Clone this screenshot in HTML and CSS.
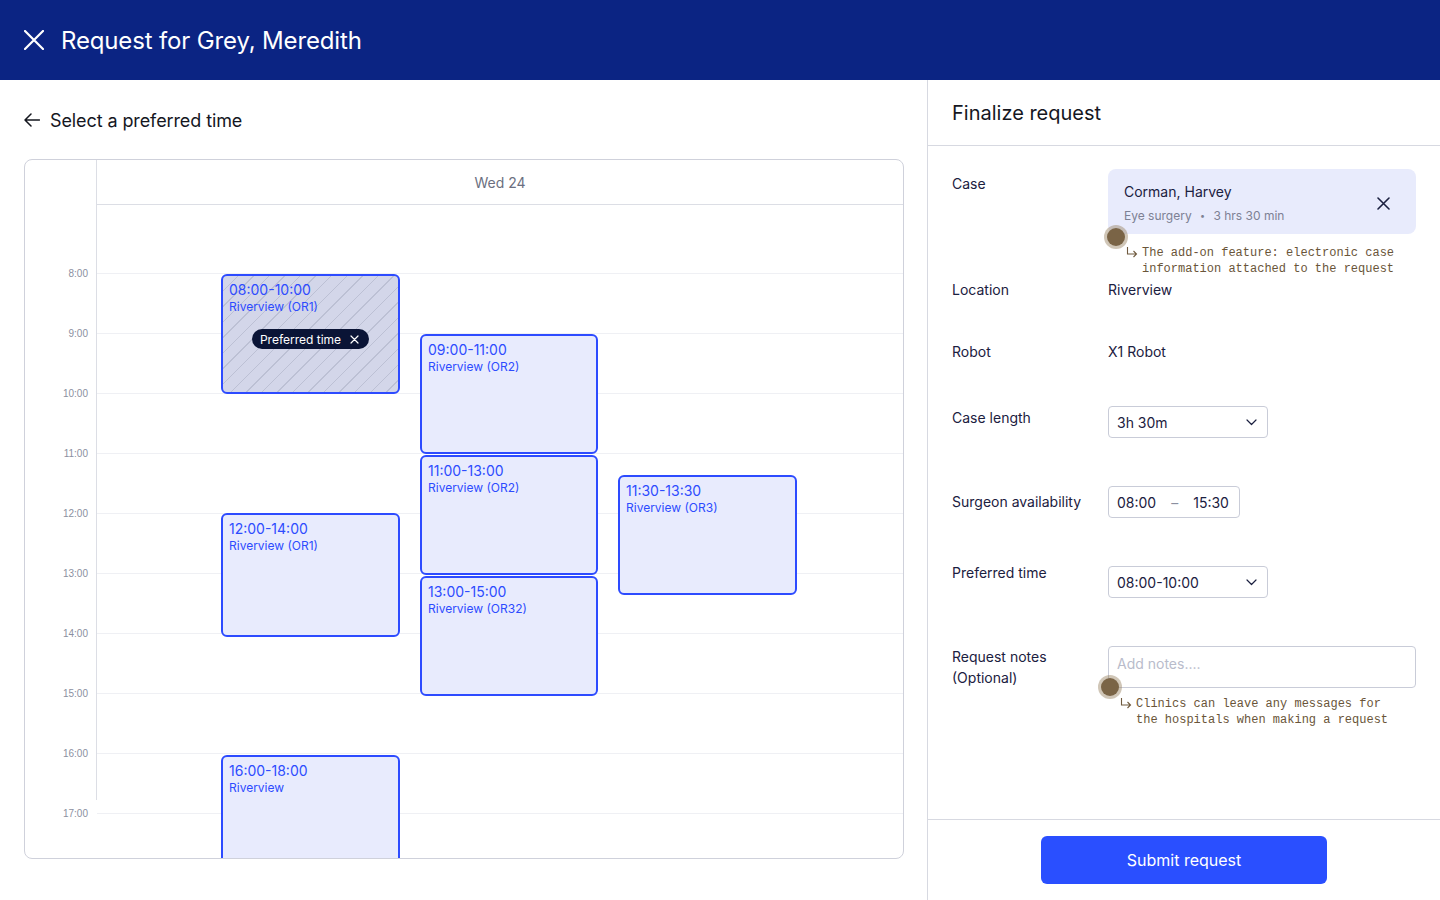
FILE: index.html
```html
<!DOCTYPE html>
<html lang="en">
<head>
<meta charset="utf-8">
<title>Request for Grey, Meredith</title>
<link rel="stylesheet" href="styles.css">
</head>
<body>
<header class="topbar">
  <span class="topbar-close" aria-label="Close">
    <svg width="20" height="20" viewBox="0 0 20 20"><path d="M1 1L19 19M19 1L1 19" stroke="#fff" stroke-width="2.2" stroke-linecap="round"/></svg>
  </span>
  <h1 class="topbar-title">Request for Grey, Meredith</h1>
</header>
<main class="layout">
  <section class="left">
    <div class="back-row">
      <svg width="16" height="14" viewBox="0 0 16 14"><path d="M15.5 7H1M7 1L1 7L7 13" fill="none" stroke="#15171f" stroke-width="1.5" stroke-linecap="round" stroke-linejoin="round"/></svg>
      <h2 class="back-title">Select a preferred time</h2>
    </div>
    <div class="calendar">
      <div class="gutter">
        <div class="time">8:00</div>
        <div class="time">9:00</div>
        <div class="time">10:00</div>
        <div class="time">11:00</div>
        <div class="time">12:00</div>
        <div class="time">13:00</div>
        <div class="time">14:00</div>
        <div class="time">15:00</div>
        <div class="time">16:00</div>
        <div class="time">17:00</div>
      </div>
      <div class="day">
        <div class="day-head">Wed 24</div>
        <div class="day-body">
          <div class="hour"></div><div class="hour"></div><div class="hour"></div><div class="hour"></div><div class="hour"></div>
          <div class="hour"></div><div class="hour"></div><div class="hour"></div><div class="hour"></div><div class="hour"></div>

          <div class="event event-preferred" style="top:69px;left:124px;width:179px;height:120px">
            <div class="ev-time">08:00-10:00</div>
            <div class="ev-loc">Riverview (OR1)</div>
            <div class="badge">Preferred time
              <svg width="9" height="9" viewBox="0 0 9 9"><path d="M1 1L8 8M8 1L1 8" stroke="#fff" stroke-width="1.2" stroke-linecap="round"/></svg>
            </div>
          </div>
          <div class="event" style="top:129px;left:323px;width:178px;height:120px">
            <div class="ev-time">09:00-11:00</div>
            <div class="ev-loc">Riverview (OR2)</div>
          </div>
          <div class="event" style="top:250px;left:323px;width:178px;height:120px">
            <div class="ev-time">11:00-13:00</div>
            <div class="ev-loc">Riverview (OR2)</div>
          </div>
          <div class="event" style="top:371px;left:323px;width:178px;height:120px">
            <div class="ev-time">13:00-15:00</div>
            <div class="ev-loc">Riverview (OR32)</div>
          </div>
          <div class="event" style="top:270px;left:521px;width:179px;height:120px">
            <div class="ev-time">11:30-13:30</div>
            <div class="ev-loc">Riverview (OR3)</div>
          </div>
          <div class="event" style="top:308px;left:124px;width:179px;height:124px">
            <div class="ev-time">12:00-14:00</div>
            <div class="ev-loc">Riverview (OR1)</div>
          </div>
          <div class="event" style="top:550px;left:124px;width:179px;height:120px">
            <div class="ev-time">16:00-18:00</div>
            <div class="ev-loc">Riverview</div>
          </div>
        </div>
      </div>
    </div>
  </section>

  <aside class="right">
    <div class="panel-head">Finalize request</div>
    <div class="form">
      <div class="row row-case">
        <div class="label">Case</div>
        <div class="value with-note">
          <div class="case-card">
            <div class="case-info">
              <div class="case-name">Corman, Harvey</div>
              <div class="case-meta">Eye surgery <span class="sep">•</span> 3 hrs 30 min</div>
            </div>
            <svg class="case-close" width="13" height="13" viewBox="0 0 13 13"><path d="M1 1L12 12M12 1L1 12" stroke="#1b2040" stroke-width="1.6" stroke-linecap="round"/></svg>
          </div>
          <span class="note-dot dot-case"></span>
          <div class="note note-case">
            <svg class="note-arrow" width="12" height="12" viewBox="0 0 12 12"><path d="M1.5 1V8H10.5M7.5 5L10.5 8L7.5 11" fill="none" stroke="#6f5a3e" stroke-width="1.1"/></svg>
            <span>The add-on feature: electronic case<br>information attached to the request</span>
          </div>
        </div>
      </div>

      <div class="row row-location">
        <div class="label">Location</div>
        <div class="value text-value">Riverview</div>
      </div>

      <div class="row row-robot">
        <div class="label">Robot</div>
        <div class="value text-value">X1 Robot</div>
      </div>

      <div class="row row-length">
        <div class="label label-length">Case length</div>
        <div class="value">
          <div class="select">3h 30m
            <svg width="11" height="7" viewBox="0 0 11 7"><path d="M1 1L5.5 5.5L10 1" fill="none" stroke="#1b2040" stroke-width="1.2" stroke-linecap="round" stroke-linejoin="round"/></svg>
          </div>
        </div>
      </div>

      <div class="row row-surgeon">
        <div class="label label-surgeon">Surgeon availability</div>
        <div class="value">
          <div class="range"><span>08:00</span><span class="dash">–</span><span>15:30</span></div>
        </div>
      </div>

      <div class="row row-preferred">
        <div class="label">Preferred time</div>
        <div class="value">
          <div class="select select-preferred">08:00-10:00
            <svg width="11" height="7" viewBox="0 0 11 7"><path d="M1 1L5.5 5.5L10 1" fill="none" stroke="#1b2040" stroke-width="1.2" stroke-linecap="round" stroke-linejoin="round"/></svg>
          </div>
        </div>
      </div>

      <div class="row row-notes">
        <div class="label label-notes">Request notes<br>(Optional)</div>
        <div class="value with-note">
          <div class="textarea">Add notes....</div>
          <span class="note-dot dot-notes"></span>
          <div class="note note-notes">
            <svg class="note-arrow" width="12" height="12" viewBox="0 0 12 12"><path d="M1.5 1V8H10.5M7.5 5L10.5 8L7.5 11" fill="none" stroke="#6f5a3e" stroke-width="1.1"/></svg>
            <span>Clinics can leave any messages for<br>the hospitals when making a request</span>
          </div>
        </div>
      </div>
    </div>
    <div class="panel-foot">
      <button class="submit" type="button">Submit request</button>
    </div>
  </aside>
</main>
</body>
</html>
```

FILE: styles.css
```css
* { box-sizing: border-box; }

html, body {
  margin: 0;
  padding: 0;
  width: 1440px;
  height: 900px;
  overflow: hidden;
  background: #ffffff;
  font-family: Inter, "Noto Sans", sans-serif;
  color: #15171f;
}

h1, h2 { margin: 0; font-weight: 400; }

/* Top bar */
.topbar {
  height: 80px;
  background: #0b2483;
  display: flex;
  align-items: center;
  padding: 0 24px;
  gap: 17px;
}
.topbar-close { display: flex; width: 20px; height: 20px; }
.topbar-title {
  color: #ffffff;
  font-size: 24px;
  line-height: 32px;
  padding-top: 2px;
  letter-spacing: -0.15px;
}

/* Layout */
.layout {
  display: flex;
  height: 820px;
}
.left {
  width: 928px;
  border-right: 1px solid #d7d9e1;
  padding: 24px 0 0 24px;
}
.right {
  width: 512px;
  display: flex;
  flex-direction: column;
}

/* Left panel */
.back-row {
  height: 32px;
  display: flex;
  align-items: center;
  gap: 10px;
  margin-bottom: 23px;
}
.back-title {
  font-size: 18px;
  line-height: 24px;
  padding-top: 2px;
  letter-spacing: -0.1px;
  color: #15171f;
}

.calendar {
  width: 880px;
  height: 700px;
  border: 1px solid #cfd1db;
  border-radius: 8px;
  overflow: hidden;
  display: flex;
}
.gutter {
  width: 72px;
  flex: none;
  position: relative;
  padding-top: 108px;
}
.gutter::after {
  content: "";
  position: absolute;
  top: 0;
  right: 0;
  width: 1px;
  height: 640px;
  background: #dcdee5;
}
.time {
  height: 60px;
  font-family: "Liberation Sans", Arial, sans-serif;
  font-size: 10px;
  line-height: 12px;
  color: #8b8fa0;
  text-align: right;
  padding-right: 9px;
}

.day {
  flex: 1;
  display: flex;
  flex-direction: column;
}
.day-head {
  height: 45px;
  border-bottom: 1px solid #dcdee5;
  text-align: center;
  line-height: 44px;
  padding-top: 1px;
  font-size: 14px;
  color: #6b6f80;
}
.day-body {
  position: relative;
  flex: 1;
  padding-top: 68px;
}
.hour {
  height: 60px;
  border-top: 1px solid #eff0f4;
}

.event {
  position: absolute;
  border: 2px solid #2d4bff;
  border-radius: 6px;
  background: #e8ebfd;
  padding: 5px 6px 4px;
  color: #2d4bff;
  display: flex;
  flex-direction: column;
}
.ev-time {
  font-size: 14px;
  line-height: 18px;
}
.ev-loc {
  font-size: 12px;
  line-height: 16px;
}
.event-preferred {
  background-color: #d3d6e9;
  background-image: repeating-linear-gradient(135deg, transparent 0 10px, #bcc0d4 10px 11px);
}
.badge {
  align-self: center;
  margin-top: 14px;
  height: 20px;
  padding: 0 10px 0 8px;
  border-radius: 10px;
  background: #0a1436;
  color: #ffffff;
  font-size: 12px;
  display: flex;
  align-items: center;
  gap: 9px;
}

/* Right panel */
.panel-head {
  height: 66px;
  border-bottom: 1px solid #d7d9e1;
  padding: 1px 24px 0;
  display: flex;
  align-items: center;
  font-size: 20px;
  color: #15171f;
}
.form {
  flex: 1;
  padding: 23px 24px 0 24px;
}
.row {
  display: grid;
  grid-template-columns: 156px 308px;
  align-items: start;
}
.label {
  font-size: 14px;
  line-height: 20px;
  color: #1b2040;
}
.value { font-size: 14px; color: #1b2040; }
.text-value { line-height: 20px; }

.row-case .label { padding-top: 5px; }
.row-location { margin-top: 3px; }
.row-robot { margin-top: 42px; }
.row-length { margin-top: 44px; }
.label-length { padding-top: 2px; }
.row-surgeon { margin-top: 48px; }
.label-surgeon { padding-top: 6px; }
.row-preferred { margin-top: 45px; }
.select-preferred { margin-top: 3px; }
.row-notes { margin-top: 48px; }
.label-notes { line-height: 21px; }

.with-note { position: relative; }

.case-card {
  background: #e8ebfc;
  border-radius: 8px;
  padding: 13px 26px 10px 16px;
  display: flex;
  align-items: center;
  justify-content: space-between;
}
.case-name {
  font-size: 14px;
  line-height: 20px;
  color: #1b2040;
}
.case-meta {
  margin-top: 6px;
  font-size: 12px;
  line-height: 16px;
  color: #7d8194;
}
.sep { margin: 0 5px; font-size: 9px; vertical-align: 1px; }

.note-dot {
  position: absolute;
  width: 18px;
  height: 18px;
  border-radius: 50%;
  background: #7a6446;
  box-shadow: 0 0 0 3px rgba(150, 128, 96, 0.45);
}
.dot-case { left: -1px; top: 59px; }
.dot-notes { left: -7px; top: 32px; }

.note {
  display: flex;
  align-items: flex-start;
  gap: 4px;
  font-family: "Liberation Mono", "DejaVu Sans Mono", monospace;
  font-size: 12px;
  line-height: 16px;
  color: #6a5539;
}
.note-arrow { flex: none; margin-top: 1px; }
.note-case { margin-top: 11px; padding-left: 18px; }
.note-notes { margin-top: 8px; padding-left: 12px; }

.select {
  width: 160px;
  height: 32px;
  border: 1px solid #c9ccd8;
  border-radius: 4px;
  padding: 0 10px 0 8px;
  display: flex;
  align-items: center;
  justify-content: space-between;
  font-size: 14px;
  color: #1b2040;
}
.range {
  width: 132px;
  height: 32px;
  border: 1px solid #c9ccd8;
  border-radius: 4px;
  padding: 0 8px;
  display: flex;
  align-items: center;
  gap: 15px;
  font-size: 14px;
  color: #1b2040;
}
.dash { color: #8b8fa0; }
.textarea {
  width: 308px;
  height: 42px;
  border: 1px solid #c9ccd8;
  border-radius: 4px;
  padding: 8px 8px;
  font-size: 14px;
  line-height: 18px;
  color: #b9bccb;
}

.panel-foot {
  height: 81px;
  border-top: 1px solid #d7d9e1;
  padding-top: 16px;
  display: flex;
  justify-content: center;
  align-items: flex-start;
}
.submit {
  width: 286px;
  height: 48px;
  border: 0;
  border-radius: 6px;
  background: #2a4fff;
  color: #ffffff;
  font-family: Inter, "Noto Sans", sans-serif;
  font-size: 16px;
  font-weight: 400;
}
```
